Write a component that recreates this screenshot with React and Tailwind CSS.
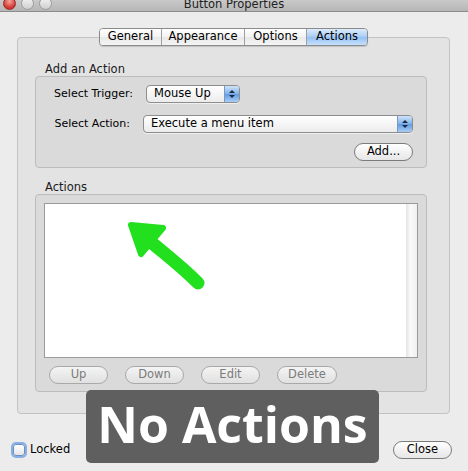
import React from "react";

const font = { fontFamily: '"DejaVu Sans", "Liberation Sans", sans-serif' };

const Light = ({ red }) => (
  <div
    className={`w-[13px] h-[13px] rounded-full border ${
      red
        ? "bg-[radial-gradient(circle_at_50%_30%,#f6a5a0,#d2322c_70%)] border-[#9a2a24]"
        : "bg-[linear-gradient(#f3f3f3,#cfcfcf)] border-[#9b9b9b]"
    }`}
  />
);

const Popup = ({ label, width }) => (
  <div
    className={`${width} h-[18px] flex items-center rounded-[4px] border border-[#8d8d8d] bg-[linear-gradient(#ffffff,#ececec)] shadow-[0_1px_0_rgba(255,255,255,0.6)] overflow-hidden`}
  >
    <span className="flex-1 pl-[7px] text-[11.5px] text-black leading-none">{label}</span>
    <div className="w-[15px] h-full flex flex-col items-center justify-center gap-[2px] border-l border-[#7a98c4] bg-[linear-gradient(#cfe3fa,#7fb1ea_50%,#5f9ae3_51%,#a9cdf4)]">
      <svg width="6" height="3" viewBox="0 0 6 3">
        <path d="M0 3 L3 0 L6 3 Z" fill="#1d2a44" />
      </svg>
      <svg width="6" height="3" viewBox="0 0 6 3">
        <path d="M0 0 L3 3 L6 0 Z" fill="#1d2a44" />
      </svg>
    </div>
  </div>
);

const Pill = ({ children, width, disabled }) => (
  <div
    className={`${width} h-[18px] flex items-center justify-center rounded-full border text-[11.5px] leading-none ${
      disabled
        ? "border-[#a9a9a9] bg-[linear-gradient(#f4f4f4,#e0e0e0)] text-[#7b7b7b]"
        : "border-[#7b7b7b] bg-[linear-gradient(#ffffff,#e6e6e6)] text-black"
    }`}
  >
    {children}
  </div>
);

const tabs = [
  { name: "General", w: "w-[61px]" },
  { name: "Appearance", w: "w-[83px]" },
  { name: "Options", w: "w-[62px]" },
  { name: "Actions", w: "w-[61px]", active: true },
];

const App = () => {
  return (
    <div className="relative w-[468px] h-[471px] overflow-hidden bg-[#ececec]" style={font}>
      {/* title bar, cropped at the top */}
      <div className="relative h-[12px] overflow-hidden border-b border-[#8c8c8c] bg-[linear-gradient(#c9c9c9,#b6b6b6)]">
        <div className="absolute left-[3px] top-[-3px] flex gap-[5px]">
          <Light red />
          <Light />
          <Light />
        </div>
        <div className="absolute inset-x-0 top-[-3px] text-center text-[11.5px] leading-[14px] text-[#222]">
          Button Properties
        </div>
      </div>

      <div className="px-[17px] pt-[16px]">
        {/* segmented tabs */}
        <div className="relative z-10 flex justify-center pr-[1px]">
          <div className="flex h-[18px] rounded-[4px] border border-[#8b8b8b] overflow-hidden shadow-[0_1px_1px_rgba(0,0,0,0.15)]">
            {tabs.map((t, i) => (
              <div
                key={t.name}
                className={`${t.w} flex items-center justify-center text-[11.5px] leading-none text-black ${
                  i > 0 ? "border-l border-[#a0a0a0]" : ""
                } ${
                  t.active
                    ? "bg-[linear-gradient(#dcecfc,#a9cdf5_50%,#93c0f3_51%,#c5e0fb)]"
                    : "bg-[linear-gradient(#ffffff,#f3f3f3_50%,#e8e8e8_51%,#f4f4f4)]"
                }`}
              >
                {t.name}
              </div>
            ))}
          </div>
        </div>

        {/* tab box */}
        <div className="-mt-[9px] w-[433px] h-[377px] rounded-[4px] border border-[#c3c3c3] bg-[#e3e3e3] px-[17px] pt-[24px]">
          <div className="pl-[10px] text-[11.5px] leading-[14px] text-[#1a1a1a]">Add an Action</div>
          <div className="w-[392px] rounded-[4px] border border-[#bcbcbc] bg-[#dadada] pt-[8px] pb-[6px] pr-[13px]">
            <div className="flex items-center">
              <div className="w-[97px] text-right text-[11px] text-black">Select Trigger:</div>
              <div className="ml-[13px]">
                <Popup label="Mouse Up" width="w-[94px]" />
              </div>
            </div>
            <div className="flex items-center mt-[12px]">
              <div className="w-[97px] text-right text-[11px] text-black">Select Action:</div>
              <div className="ml-[13px]">
                <Popup label="Execute a menu item" width="w-[270px]" />
              </div>
            </div>
            <div className="flex justify-end mt-[10px]">
              <Pill width="w-[59px]">Add...</Pill>
            </div>
          </div>

          <div className="mt-[12px] pl-[10px] text-[11.5px] leading-[14px] text-[#1a1a1a]">Actions</div>
          <div className="w-[392px] rounded-[4px] border border-[#bcbcbc] bg-[#dadada] px-[8px] pt-[8px] pb-[7px]">
            <div className="relative h-[155px] flex border border-[#9a9a9a] bg-white">
              <div className="flex-1" />
              <div className="w-[11px] bg-[linear-gradient(90deg,#e4e4e4,#fafafa_40%,#f0f0f0)]" />
              {/* annotation arrow */}
              <svg className="absolute left-[80px] top-[14px]" width="90" height="80" viewBox="0 0 90 80">
                <path
                  d="M26 24 C40 36 56 48 73 65"
                  stroke="#22e01e"
                  strokeWidth="13"
                  strokeLinecap="round"
                  fill="none"
                />
                <path
                  d="M6 7 L38 10 L16 36 Z"
                  fill="#22e01e"
                  stroke="#22e01e"
                  strokeWidth="6"
                  strokeLinejoin="round"
                />
              </svg>
            </div>
            <div className="flex gap-[17px] pl-[5px] mt-[8px]">
              <Pill width="w-[59px]" disabled>Up</Pill>
              <Pill width="w-[59px]" disabled>Down</Pill>
              <Pill width="w-[59px]" disabled>Edit</Pill>
              <Pill width="w-[60px]" disabled>Delete</Pill>
            </div>
          </div>
        </div>

        {/* bottom row */}
        <div className="mt-[27px] flex items-center justify-between -ml-[4px]">
          <div className="flex items-center gap-[5px]">
            <div className="w-[12px] h-[12px] rounded-[3px] border border-[#6b8fbf] bg-[linear-gradient(#ffffff,#e4e4e4)] shadow-[0_0_0_2px_#86b0e4]" />
            <span className="text-[11.5px] text-black">Locked</span>
          </div>
          <div className="mr-[-1px]">
            <Pill width="w-[59px]">Close</Pill>
          </div>
        </div>
      </div>

      {/* HUD overlay */}
      <div className="absolute left-[86px] top-[390px] w-[293px] h-[73px] rounded-[5px] bg-[#5f5f5f] flex items-center justify-center pb-[6px]">
        <span className="text-white font-bold text-[50px] leading-none" style={{ fontFamily: '"Open Sans", sans-serif' }}>
          No Actions
        </span>
      </div>
    </div>
  );
};

export default App;
